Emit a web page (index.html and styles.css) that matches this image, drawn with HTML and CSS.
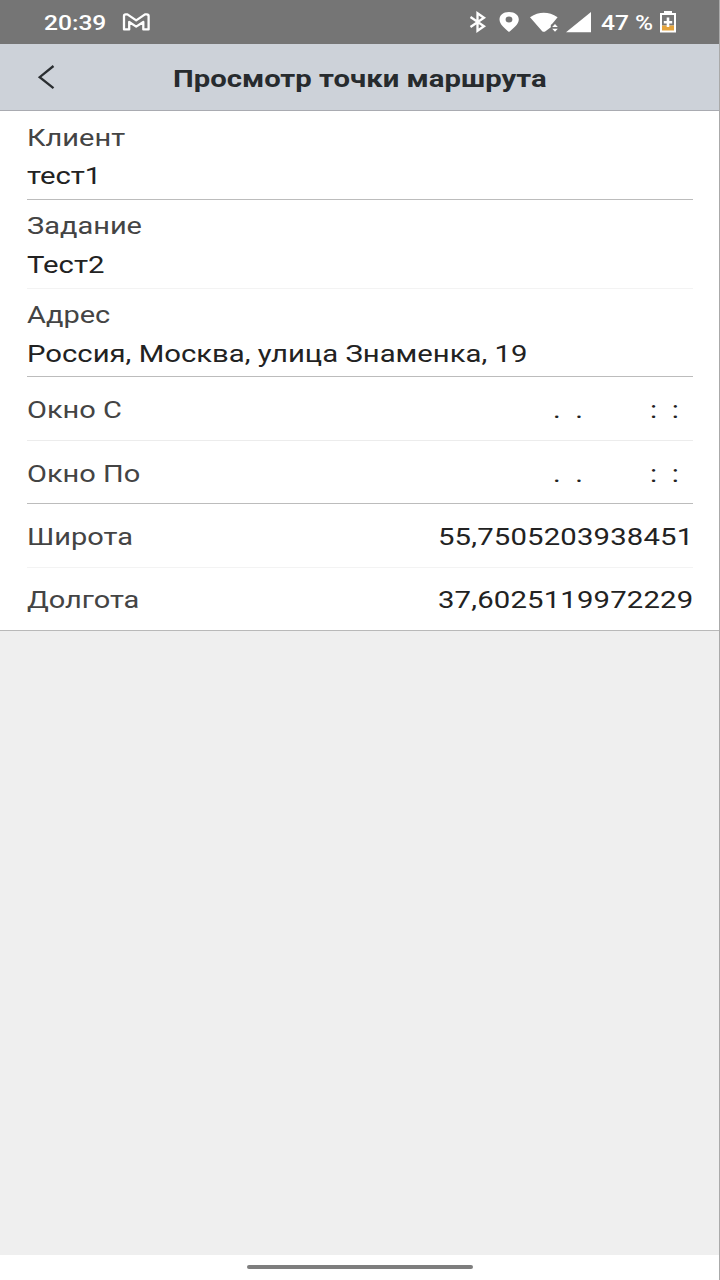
FILE: index.html
```html
<!DOCTYPE html>
<html lang="ru">
<head>
<meta charset="utf-8">
<title>Просмотр точки маршрута</title>
<link rel="stylesheet" href="styles.css">
</head>
<body>
<div class="screen">
  <div class="status">
    <span class="wide clock">20:39</span>
    <svg class="mail" width="28" height="18" viewBox="0 0 28 18"><path d="M2 3Q2 1.4 3.6 1.4H5.4L14.2 7.4L23 1.4H24.8Q26.6 1.4 26.6 3V16.4H21.3V9L14.2 13.6L7.2 9V16.4H2Z" fill="none" stroke="#fff" stroke-width="2.3" stroke-linejoin="round"/></svg>
    <svg class="icons" width="124" height="24" viewBox="468 10 124 24">
      <path d="M470.5 17L484 26.2L477.5 30.8V13.2L484 17.7L470.5 27" fill="none" stroke="#fff" stroke-width="2.3"/>
      <path d="M509 12C503 12 499.5 15.3 499.5 19.5C499.5 24.5 505 28.5 509 32C513 28.5 518.8 24.5 518.8 19.5C518.8 15.3 515 12 509 12ZM509 16.5A3.4 3 0 1 1 509 22.5A3.4 3 0 1 1 509 16.5Z" fill="#fff" fill-rule="evenodd"/>
      <path d="M530 17.2Q543.8 8.5 557.6 17.2L552.7 23.2L550.8 25V27.3L545.5 31.2Q543.8 32.4 542.2 31.2Z" fill="#fff"/>
      <path d="M552.2 27L555 24L557.8 27ZM552.2 28.8L555 31.8L557.8 28.8Z" fill="#fff"/>
      <path d="M591 12V32.3H566Z" fill="#fff"/>
    </svg>
    <span class="wide percent">47 %</span>
    <svg class="battery" width="18" height="22" viewBox="0 0 18 22">
      <path d="M5 0H13V2H17V21.5H1V2H5Z" fill="#fff"/>
      <path d="M3 4H15V14.5H3Z" fill="#777"/>
      <path d="M3 14.5H15V19.5H3Z" fill="#e5a43c"/>
      <path d="M9 6.5V16M4.8 11.2H13.2" stroke="#fff" stroke-width="2.6"/>
    </svg>
  </div>
  <header class="header">
    <svg class="back" width="18" height="26" viewBox="0 0 18 26"><path d="M16.5 2L2.7 13.2L16.5 24.2" fill="none" stroke="#2a2e31" stroke-width="2.3"/></svg>
    <h1 class="title"><span class="wide">Просмотр точки маршрута</span></h1>
  </header>
  <main class="form">
    <div class="field first strong"><span class="wide label">Клиент</span><span class="wide value">тест1</span></div>
    <div class="field faint"><span class="wide label">Задание</span><span class="wide value">Тест2</span></div>
    <div class="field strong"><span class="wide label">Адрес</span><span class="wide value address">Россия, Москва, улица Знаменка, 19</span></div>
    <div class="row light"><span class="wide label">Окно С</span><span class="stamp"><span class="wide">. .</span><span class="wide">: :</span></span></div>
    <div class="row lower strong"><span class="wide label">Окно По</span><span class="stamp"><span class="wide">. .</span><span class="wide">: :</span></span></div>
    <div class="row faint"><span class="wide label">Широта</span><span class="wide value number">55,7505203938451</span></div>
    <div class="row last"><span class="wide label">Долгота</span><span class="wide value number">37,6025119972229</span></div>
  </main>
  <div class="empty"></div>
  <div class="nav"><div class="handle"></div></div>
  <div class="edge"></div>
</div>
</body>
</html>
```
FILE: styles.css
```css
* { box-sizing: border-box; }
body { margin: 0; }
.screen {
  position: relative;
  display: flex;
  flex-direction: column;
  width: 720px;
  height: 1280px;
  overflow: hidden;
  background: #efefef;
  font: 24px/38px Roboto, "Noto Sans", sans-serif;
  color: #222;
}
/* Text is drawn 22% wider than its natural proportions */
.wide {
  display: block;
  width: max-content;
  white-space: nowrap;
  transform: scaleX(1.22);
  transform-origin: left center;
}
.status {
  display: flex;
  align-items: center;
  height: 44px;
  padding-left: 44px;
  background: #757575;
  color: #fff;
  font-size: 21px;
  font-weight: 500;
}
.status .wide { transform: scaleX(1.17); padding-top: 1px; }
.clock { width: 78px; }
.icons { margin-left: 318px; }
.percent { width: 58px; margin-left: 9px; }
.header {
  display: flex;
  align-items: center;
  height: 67px;
  padding: 2px 0 0 37px;
  background: #cdd2d9;
  border-bottom: 1px solid #a9abb1;
}
.back { margin-top: -2px; }
.title {
  margin: 2px 0 0 118px;
  font-size: 24px;
  font-weight: 700;
  color: #272b2e;
}
.form {
  display: grid;
  grid-template-rows: 89px 89px 88px 64px 63px 64px 63px;
  height: 520px;
  padding: 0 27px;
  background: #fff;
  border-bottom: 1px solid #b9b9b9;
}
.field {
  padding-top: 7px;
}
.field .value { margin-top: 1px; }
.first { padding-top: 8px; }
.first .value { margin-top: 0; }
.row {
  display: flex;
  align-items: center;
  justify-content: space-between;
  padding-top: 2px;
}
.lower { padding-top: 4px; }
.last { padding-top: 0; }
.label { color: #444; transform: scaleX(1.207); }
.number { transform-origin: right center; letter-spacing: 0.14px; }
.strong { border-bottom: 1px solid #bcbcbc; }
.light { border-bottom: 1px solid #ececec; }
.faint { border-bottom: 1px solid #f3f3f3; }
.stamp { display: flex; width: 140px; word-spacing: 6px; }
.stamp .wide { width: 97px; }
.stamp .wide + .wide { width: 43px; }
.empty { flex: 1; }
.nav {
  display: flex;
  justify-content: center;
  height: 25px;
  padding-top: 10px;
  background: #fff;
}
.handle {
  width: 226px;
  height: 4px;
  border-radius: 2px;
  background: #7e7e7e;
}
.edge {
  position: absolute;
  top: 0;
  right: 0;
  width: 1px;
  height: 100%;
  background: #aaa;
}
```
